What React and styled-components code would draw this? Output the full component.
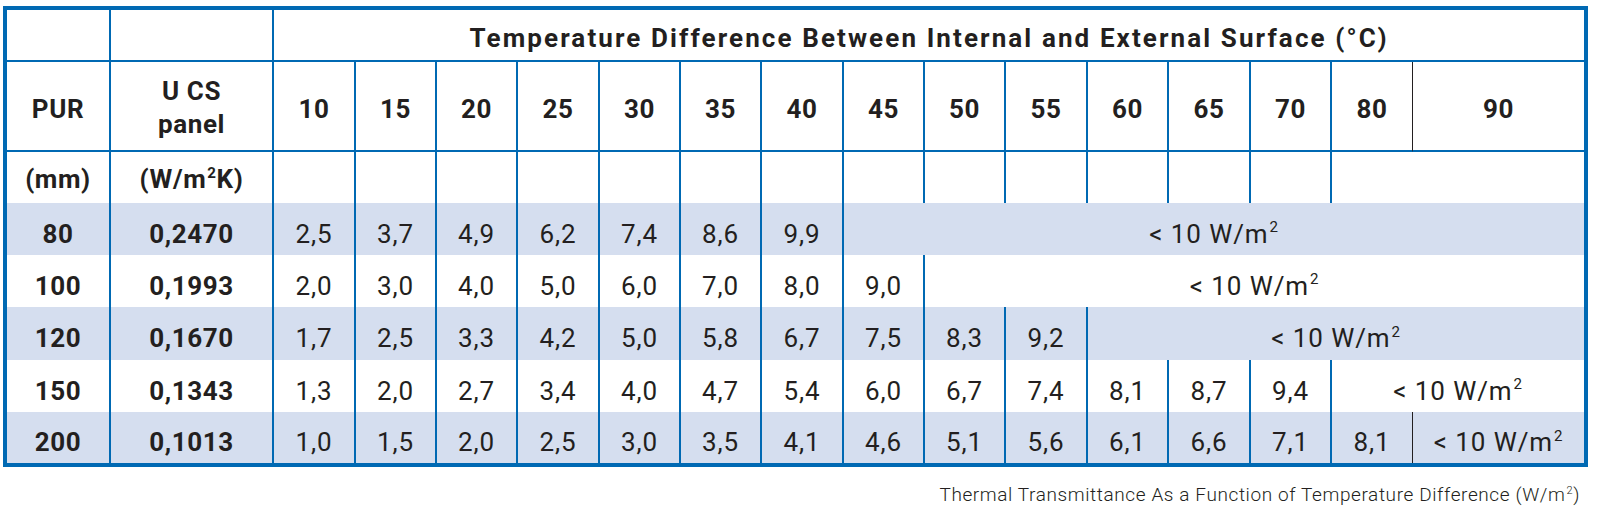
import React from 'react';
import styled, {createGlobalStyle} from 'styled-components';

const Colors = {
  blue: '#0069b3',
  shade: '#d5deef',
  ink: '#231f20',
};

const GlobalStyle = createGlobalStyle`
  body {
    margin: 0;
    background: #fff;
    font-family: Roboto, "Liberation Sans", sans-serif;
    color: ${Colors.ink};
  }
`;

const Page = styled.div`
  width: 1588px;
  padding: 6px 0 0 3px;
`;

const Frame = styled.div`
  width: 1577px;
  border: 4px solid ${Colors.blue};
`;

const Table = styled.table`
  width: 1577px;
  table-layout: fixed;
  border-collapse: separate;
  border-spacing: 0;
`;

const Col = styled.col`
  width: ${p => p.$w}px;
`;

const Row = styled.tr`
  height: ${p => p.$h}px;
  background: ${p => (p.$shade ? Colors.shade : '#fff')};
`;

const Cell = styled.td`
  box-sizing: border-box;
  padding: ${p => p.$pad || 0}px 0 0 0;
  text-align: center;
  vertical-align: middle;
  font-size: 26px;
  line-height: 33px;
  font-weight: ${p => (p.$bold ? 700 : 400)};
  letter-spacing: ${p => (p.$bold ? 0.6 : 0.9)}px;
  white-space: nowrap;
  border-right: ${p =>
    p.$right === 'black' ? `1px solid ${Colors.ink}` : p.$right ? `2px solid ${Colors.blue}` : 'none'};
  border-bottom: ${p => (p.$bottom ? `2px solid ${Colors.blue}` : 'none')};
`;

const Title = styled(Cell)`
  letter-spacing: 2.1px;
`;

const Sup = styled.sup`
  font-size: 0.58em;
  line-height: 0;
  vertical-align: 0;
  position: relative;
  top: -0.68em;
  margin-left: 1px;
`;

const Caption = styled.p`
  width: 1577px;
  margin: 16px 0 0 0;
  text-align: right;
  font-size: 19px;
  font-weight: 300;
  letter-spacing: 0.6px;
`;

const colWidths = [104, 163, 82, 81, 81, 82, 81, 81, 82, 81, 81, 82, 81, 82, 81, 81, 171];
const temps = ['10', '15', '20', '25', '30', '35', '40', '45', '50', '55', '60', '65', '70', '80', '90'];

const rows = [
  {pur: '80', u: '0,2470', vals: ['2,5', '3,7', '4,9', '6,2', '7,4', '8,6', '9,9'], h: 52},
  {pur: '100', u: '0,1993', vals: ['2,0', '3,0', '4,0', '5,0', '6,0', '7,0', '8,0', '9,0'], h: 52},
  {pur: '120', u: '0,1670', vals: ['1,7', '2,5', '3,3', '4,2', '5,0', '5,8', '6,7', '7,5', '8,3', '9,2'], h: 53},
  {pur: '150', u: '0,1343', vals: ['1,3', '2,0', '2,7', '3,4', '4,0', '4,7', '5,4', '6,0', '6,7', '7,4', '8,1', '8,7', '9,4'], h: 52},
  {pur: '200', u: '0,1013', vals: ['1,0', '1,5', '2,0', '2,5', '3,0', '3,5', '4,1', '4,6', '5,1', '5,6', '6,1', '6,6', '7,1', '8,1'], h: 51},
];

const Limit = () => (
  <>&lt; 10 W/m<Sup>2</Sup></>
);

const App = () => {
  return (
    <Page>
      <GlobalStyle />
      <Frame>
        <Table>
          <colgroup>
            {colWidths.map((w, i) => <Col key={i} $w={w} />)}
          </colgroup>
          <tbody>
            <Row $h={52}>
              <Cell $right $bottom />
              <Cell $right $bottom />
              <Title colSpan={15} $bold $bottom $pad={6}>
                Temperature Difference Between Internal and External Surface (°C)
              </Title>
            </Row>
            <Row $h={90}>
              <Cell $right $bottom $bold $pad={6}>PUR</Cell>
              <Cell $right $bottom $bold $pad={4}>U CS<br />panel</Cell>
              {temps.map((t, i) => (
                <Cell
                  key={t}
                  $bold
                  $bottom
                  $pad={6}
                  $right={i === 13 ? 'black' : i < 14}
                >
                  {t}
                </Cell>
              ))}
            </Row>
            <Row $h={51}>
              <Cell $right $bold $pad={4}>(mm)</Cell>
              <Cell $right $bold $pad={4}>(W/m<Sup>2</Sup>K)</Cell>
              {temps.slice(0, 13).map(t => <Cell key={t} $right />)}
              <Cell colSpan={2} />
            </Row>
            {rows.map((r, ri) => {
              const rest = 15 - r.vals.length;
              return (
                <Row key={r.pur} $h={r.h} $shade={ri % 2 === 0}>
                  <Cell $right $bold $pad={10}>{r.pur}</Cell>
                  <Cell $right $bold $pad={10}>{r.u}</Cell>
                  {r.vals.map((v, i) => (
                    <Cell key={i} $pad={10} $right={i === 13 ? 'black' : true}>{v}</Cell>
                  ))}
                  <Cell colSpan={rest} $pad={10}><Limit /></Cell>
                </Row>
              );
            })}
          </tbody>
        </Table>
      </Frame>
      <Caption>Thermal Transmittance As a Function of Temperature Difference (W/m<Sup>2</Sup>)</Caption>
    </Page>
  );
};

export default App;
